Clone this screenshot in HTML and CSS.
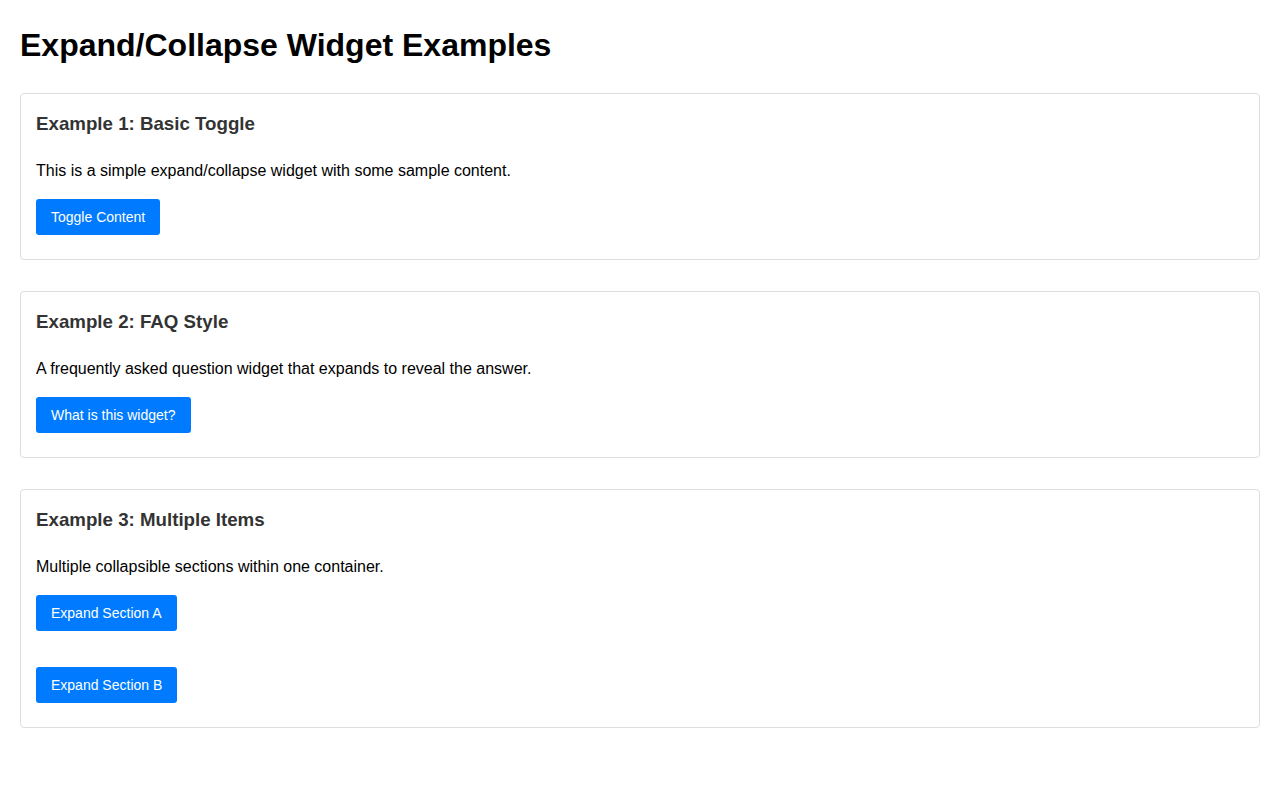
FILE: index.html
```html
<!DOCTYPE html>
<html lang="en">
<head>
<meta charset="utf-8">
<title>Expand/Collapse Widget Examples</title>
<link rel="stylesheet" href="styles.css">
</head>
<body>
  <h1 class="page-title">Expand/Collapse Widget Examples</h1>

  <section class="widget">
    <h3 class="widget-title">Example 1: Basic Toggle</h3>
    <p class="widget-text">This is a simple expand/collapse widget with some sample content.</p>
    <div class="item">
      <button class="toggle-btn" type="button">Toggle Content</button>
      <div class="collapse-content"></div>
    </div>
  </section>

  <section class="widget">
    <h3 class="widget-title">Example 2: FAQ Style</h3>
    <p class="widget-text">A frequently asked question widget that expands to reveal the answer.</p>
    <div class="item">
      <button class="toggle-btn" type="button">What is this widget?</button>
      <div class="collapse-content"></div>
    </div>
  </section>

  <section class="widget">
    <h3 class="widget-title">Example 3: Multiple Items</h3>
    <p class="widget-text">Multiple collapsible sections within one container.</p>
    <div class="item">
      <button class="toggle-btn" type="button">Expand Section A</button>
      <div class="collapse-content"></div>
    </div>
    <div class="item">
      <button class="toggle-btn" type="button">Expand Section B</button>
      <div class="collapse-content"></div>
    </div>
  </section>
</body>
</html>
```

FILE: styles.css
```css
html, body {
  background: #ffffff;
}

body {
  margin: 0;
  padding: 20px;
  font-family: "Liberation Sans", Arial, Helvetica, sans-serif;
  font-size: 16px;
  line-height: 1.6;
  color: #000000;
}

.page-title {
  margin: 0 0 22px 0;
  font-size: 32px;
  font-weight: bold;
}

.widget {
  border: 1px solid #dddddd;
  border-radius: 4px;
  padding: 15px;
  margin-bottom: 30.7px;
}

.widget-title {
  margin: 0 0 18.72px 0;
  font-size: 18.72px;
  font-weight: bold;
  color: #333333;
}

.widget-text {
  margin: 0 0 16px 0;
}

.item {
  display: flex;
  flex-direction: column;
  align-items: flex-start;
}

.item + .item {
  margin-top: 27px;
}

.toggle-btn {
  background: #007bff;
  color: #ffffff;
  border: none;
  border-radius: 3px;
  padding: 10px 15px;
  font-family: "Liberation Sans", Arial, Helvetica, sans-serif;
  font-size: 14px;
  line-height: normal;
  cursor: pointer;
}

.collapse-content {
  height: 0;
  overflow: hidden;
  margin-top: 9px;
}
```
